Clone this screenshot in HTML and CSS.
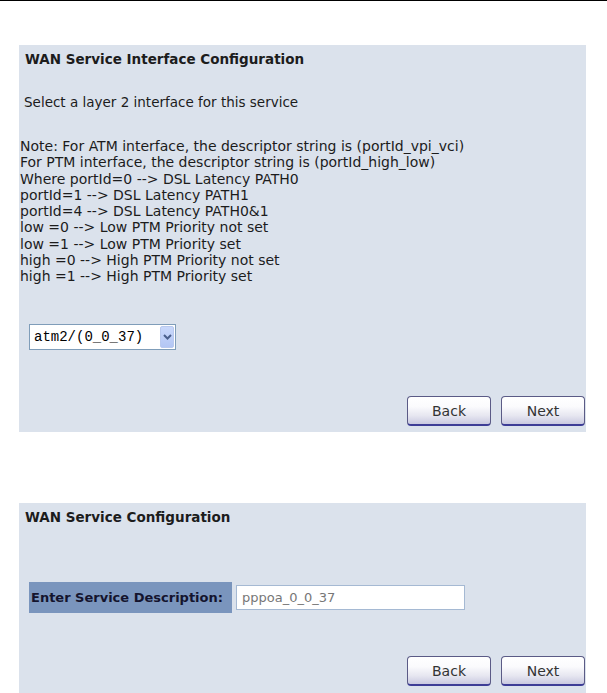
FILE: index.html
```html
<!DOCTYPE html>
<html>
<head>
<meta charset="utf-8">
<link rel="stylesheet" href="styles.css">
</head>
<body>
<div class="topline"></div>
<div class="panel panel-one">
  <div class="title">WAN Service Interface Configuration</div>
  <div class="intro">Select a layer 2 interface for this service</div>
  <div class="notes">
    <div>Note: For ATM interface, the descriptor string is (portId_vpi_vci)</div>
    <div>For PTM interface, the descriptor string is (portId_high_low)</div>
    <div>Where portId=0 --&gt; DSL Latency PATH0</div>
    <div>portId=1 --&gt; DSL Latency PATH1</div>
    <div>portId=4 --&gt; DSL Latency PATH0&amp;1</div>
    <div>low =0 --&gt; Low PTM Priority not set</div>
    <div>low =1 --&gt; Low PTM Priority set</div>
    <div>high =0 --&gt; High PTM Priority not set</div>
    <div>high =1 --&gt; High PTM Priority set</div>
  </div>
  <div class="select">
    <span class="select-text">atm2/(0_0_37)</span>
    <span class="select-arrow"><svg width="9" height="6" viewBox="0 0 9 6"><path d="M1 1 L4.5 4.5 L8 1" fill="none" stroke="#4a5f8c" stroke-width="2"/></svg></span>
  </div>
  <div class="buttons">
    <div class="btn">Back</div>
    <div class="btn">Next</div>
  </div>
</div>
<div class="panel panel-two">
  <div class="title">WAN Service Configuration</div>
  <div class="field-row">
    <div class="label">Enter Service Description:</div>
    <div class="input">pppoa_0_0_37</div>
  </div>
  <div class="buttons buttons-two">
    <div class="btn">Back</div>
    <div class="btn">Next</div>
  </div>
</div>
</body>
</html>
```
FILE: styles.css
```css
html, body {
  margin: 0;
  padding: 0;
  background: #ffffff;
}
body {
  font-family: "DejaVu Sans", "Liberation Sans", sans-serif;
  font-size: 13px;
  color: #1c1c1c;
  width: 607px;
  height: 693px;
  overflow: hidden;
}
.topline {
  height: 1px;
  background: #000;
}
.panel {
  margin-left: 19px;
  width: 567px;
  background: #dbe2ec;
  display: flex;
  flex-direction: column;
}
.panel-one {
  margin-top: 44px;
  height: 387px;
}
.panel-two {
  margin-top: 71px;
  height: 190px;
}
.title {
  font-weight: bold;
  font-size: 13.5px;
  line-height: 16px;
  padding: 6px 0 0 6px;
}
.intro {
  font-size: 13.5px;
  line-height: 16px;
  margin-top: 27px;
  padding-left: 5px;
}
.notes {
  font-size: 14px;
  margin-top: 28px;
  padding-left: 1px;
  line-height: 16.25px;
}
.select {
  margin: 40px 0 0 10px;
  height: 24px;
  border: 1px solid #7f9db9;
  background: #fff;
  display: flex;
  align-items: center;
  justify-content: space-between;
  padding: 0 1px 0 4px;
  box-sizing: content-box;
  width: 140px;
}
.select-text {
  font-family: "Liberation Mono", monospace;
  font-size: 14px;
  color: #000;
}
.select-arrow {
  width: 14px;
  height: 22px;
  background: linear-gradient(#c9d8fb, #b3c6f4);
  border: 1px solid #b9c9ee;
  box-sizing: border-box;
  border-radius: 2px;
  display: flex;
  align-items: center;
  justify-content: center;
}
.buttons {
  margin-top: auto;
  margin-bottom: 6px;
  display: flex;
  justify-content: flex-end;
  gap: 10px;
  padding-right: 1px;
}
.btn {
  width: 82px;
  height: 27px;
  border: 1px solid #5b5b86;
  border-bottom: 2px solid #3d3d96;
  border-radius: 4px;
  background: linear-gradient(#ffffff 0%, #fbfbfd 35%, #e6e6f0 70%, #c9c9e0 100%);
  box-sizing: content-box;
  display: flex;
  align-items: center;
  justify-content: center;
  font-size: 14px;
  color: #333;
}
.field-row {
  margin: 57px 0 0 10px;
  display: flex;
  align-items: center;
  gap: 4px;
}
.label {
  background: #7a95bd;
  width: 201px;
  height: 31px;
  line-height: 31px;
  padding-left: 2px;
  font-weight: bold;
  color: #14142e;
}
.input {
  width: 222px;
  height: 23px;
  line-height: 23px;
  border: 1px solid #a5b9d3;
  background: #fff;
  padding-left: 5px;
  color: #777;
}
.buttons-two {
  margin-bottom: 7px;
}
```
